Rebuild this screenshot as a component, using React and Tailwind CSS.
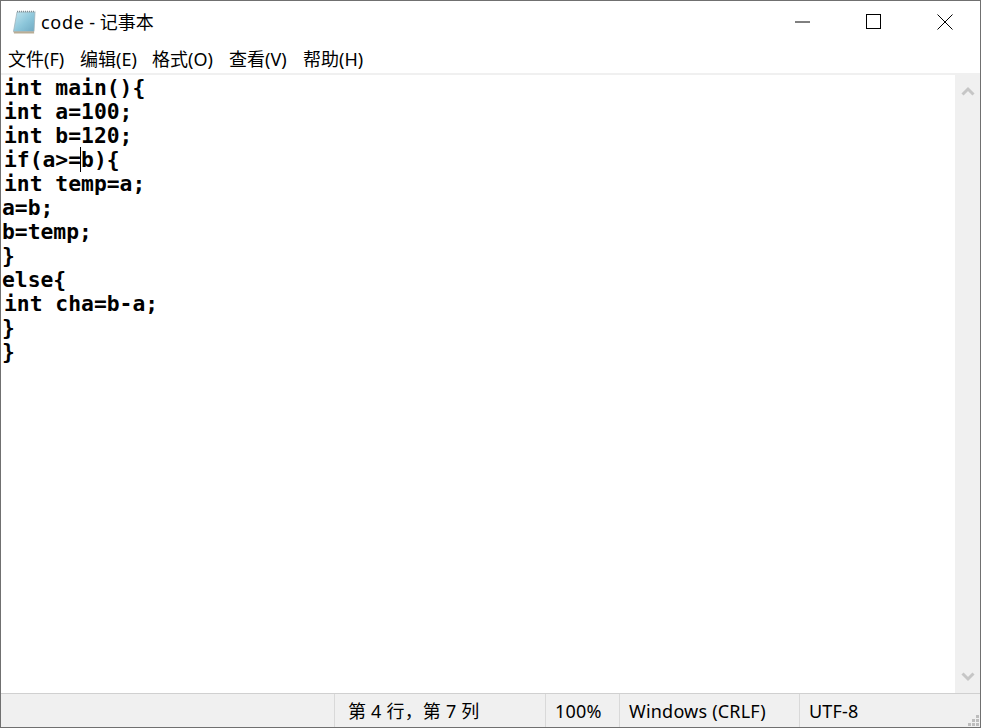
const UI_FONT = "font-['Noto_Sans','Noto_Sans_CJK_SC',sans-serif]";

const codeLines = [
  { text: 'int main(){', indent: true },
  { text: 'int a=100;', indent: true },
  { text: 'int b=120;', indent: true },
  { text: 'if(a>=b){', indent: true, caret: true },
  { text: 'int temp=a;', indent: true },
  { text: 'a=b;' },
  { text: 'b=temp;' },
  { text: '}' },
  { text: 'else{' },
  { text: 'int cha=b-a;', indent: true },
  { text: '}' },
  { text: '}' },
];

const menuItems = [
  { label: '文件(F)', width: 'w-[72px]' },
  { label: '编辑(E)', width: 'w-[72px]' },
  { label: '格式(O)', width: 'w-[77px]' },
  { label: '查看(V)', width: 'w-[74px]' },
  { label: '帮助(H)', width: 'w-[70px]' },
];

function NotepadIcon() {
  return (
    <svg width="26" height="26" viewBox="0 0 26 26" className="shrink-0">
      <defs>
        <linearGradient id="pad" x1="0" y1="0" x2="1" y2="1">
          <stop offset="0" stopColor="#c4e6f0" />
          <stop offset="0.55" stopColor="#8cc6da" />
          <stop offset="1" stopColor="#6fa9c2" />
        </linearGradient>
      </defs>
      <path d="M5 3H23L22 22.5H1.5Z" fill="url(#pad)" stroke="#9fb4bb" strokeWidth="0.8" />
      <path d="M1.5 22.5H22L22.2 24.5H2Z" fill="#b9ad95" />
      <path d="M5 2.5H23.2" stroke="#7f8f96" strokeWidth="1.6" strokeDasharray="1 1" />
    </svg>
  );
}

function WindowButtons() {
  return (
    <div className="flex h-full">
      <div className="flex w-[71px] items-center justify-center pb-[1px]">
        <svg width="16" height="2" viewBox="0 0 16 2">
          <path d="M0 1H15" stroke="#000" strokeWidth="1" />
        </svg>
      </div>
      <div className="flex w-[71px] items-center justify-center pb-[1px]">
        <svg width="16" height="16" viewBox="0 0 16 16">
          <rect x="0.5" y="0.5" width="14" height="14" fill="none" stroke="#000" />
        </svg>
      </div>
      <div className="flex w-[71px] items-center justify-center pb-[1px]">
        <svg width="16" height="16" viewBox="0 0 16 16">
          <path d="M0.5 0.5L15.5 15.5M15.5 0.5L0.5 15.5" stroke="#000" strokeWidth="1" />
        </svg>
      </div>
    </div>
  );
}

function Scrollbar() {
  return (
    <div className="flex w-[25px] shrink-0 flex-col items-center justify-between bg-[#f0f0f0] py-[11px]">
      <svg width="14" height="10" viewBox="0 0 14 10">
        <path d="M1.5 8.5L7 3L12.5 8.5" fill="none" stroke="#c6c6c6" strokeWidth="3" />
      </svg>
      <svg width="14" height="10" viewBox="0 0 14 10">
        <path d="M1.5 1.5L7 7L12.5 1.5" fill="none" stroke="#c6c6c6" strokeWidth="3" />
      </svg>
    </div>
  );
}

function StatusCell({ width, children }) {
  return (
    <div className={`${width} flex h-full shrink-0 items-center border-l border-[#d9d9d9] pl-[9px]`}>
      {children}
    </div>
  );
}

export default function App() {
  return (
    <div className={`flex h-[728px] w-[981px] flex-col overflow-hidden border border-[#707070] bg-white text-black ${UI_FONT}`}>
      {/* Title bar */}
      <div className="flex h-[43px] shrink-0 items-center justify-between">
        <div className="flex items-center pb-[2px] pl-[11px] text-[18px] leading-none">
          <NotepadIcon />
          <span className="ml-[3px]">
            <span className="tracking-[0.7px]">code</span> - 记事本
          </span>
        </div>
        <WindowButtons />
      </div>

      {/* Menu */}
      <div className="flex h-[29px] shrink-0 items-center pl-[7px] pt-[2px] text-[18px]">
        {menuItems.map((item) => (
          <div key={item.label} className={`${item.width} whitespace-nowrap`}>
            {item.label}
          </div>
        ))}
      </div>
      <div className="h-[2px] shrink-0 bg-[#f0f0f0]" />

      {/* Editor */}
      <div className="flex min-h-0 flex-1">
        <div className="flex-1 pl-[1px] pt-[1px] font-['DejaVu_Sans_Mono',monospace] text-[21.33px] font-bold leading-[24px]">
          {codeLines.map((line, i) => (
            <div key={i} className={`h-[24px] whitespace-pre ${line.indent ? 'pl-[2px]' : ''}`}>
              {line.caret ? (
                <span className="relative">
                  {line.text.slice(0, 6)}
                  <span className="absolute bottom-0 right-0 top-0 w-px bg-black" />
                </span>
              ) : null}
              {line.caret ? line.text.slice(6) : line.text}
            </div>
          ))}
        </div>
        <Scrollbar />
      </div>

      {/* Status bar */}
      <div className="relative flex h-[34px] shrink-0 items-center justify-end border-t border-[#d0d0d0] bg-[#f0f0f0] text-[18px] leading-none tracking-[0.2px]">
        <StatusCell width="w-[211px]">
          <span className="pl-[4px]">第 4 行，第 7 列</span>
        </StatusCell>
        <StatusCell width="w-[74px]">100%</StatusCell>
        <StatusCell width="w-[180px]">Windows (CRLF)</StatusCell>
        <StatusCell width="w-[181px]">UTF-8</StatusCell>
        <svg width="12" height="12" viewBox="0 0 12 12" className="absolute bottom-0 right-0" fill="#bdbdbd">
          <rect x="8" y="0" width="3" height="3" />
          <rect x="4" y="4" width="3" height="3" />
          <rect x="8" y="4" width="3" height="3" />
          <rect x="0" y="8" width="3" height="3" />
          <rect x="4" y="8" width="3" height="3" />
          <rect x="8" y="8" width="3" height="3" />
        </svg>
      </div>
    </div>
  );
}
